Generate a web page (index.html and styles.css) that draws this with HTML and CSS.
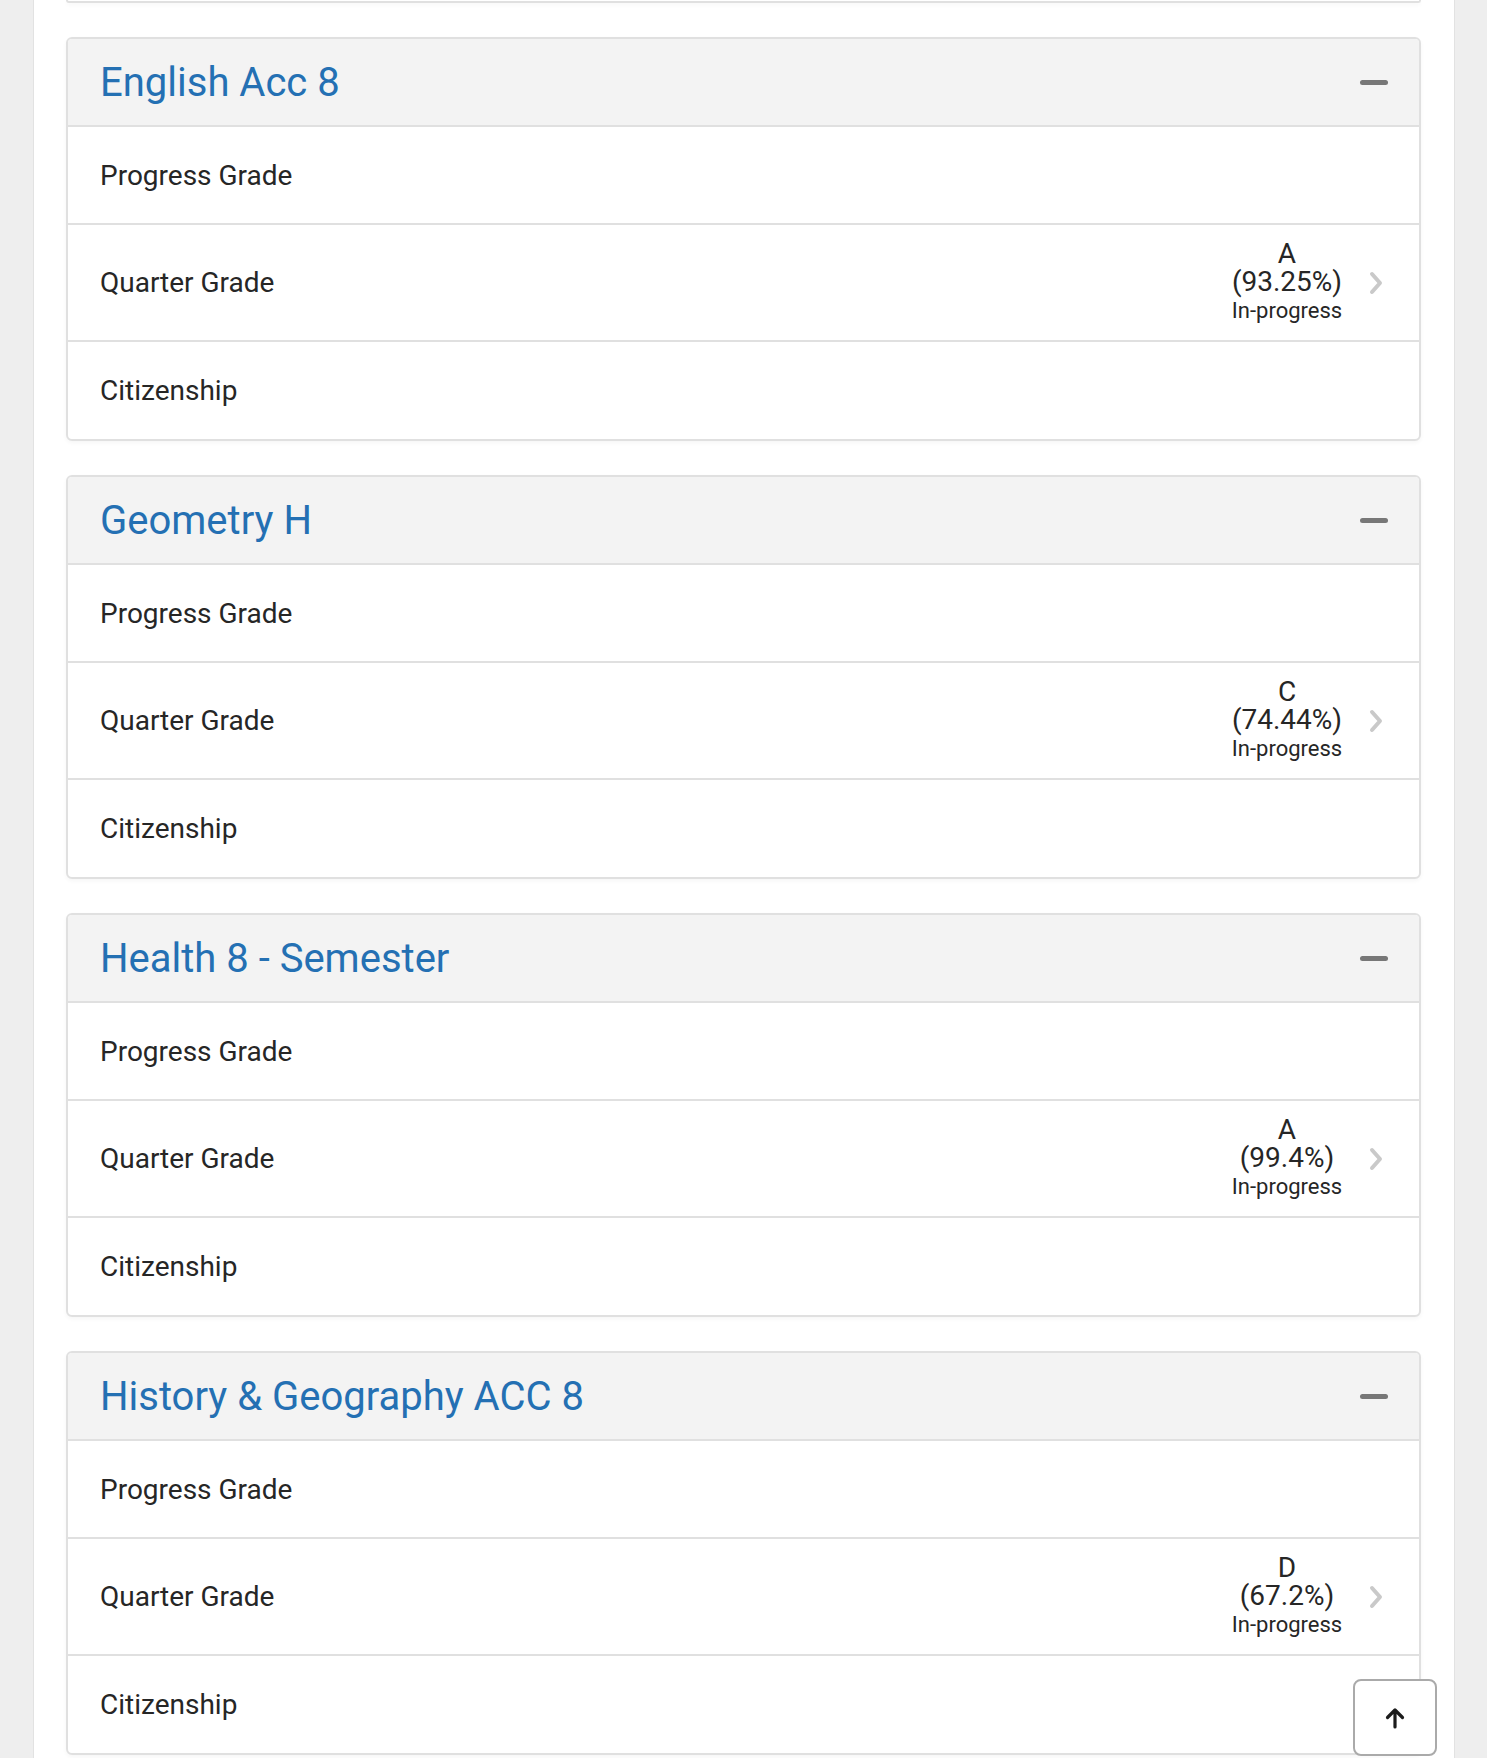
FILE: index.html
```html
<!DOCTYPE html>
<html>

	<head>
		<meta charset="UTF-8">
		<title>Grades</title>
		<link rel="stylesheet" href="styles.css">
	</head>

	<body>
		<div class="panel">
			<div class="card stub"></div>

			<div class="card">
				<div class="card-head">
					<div class="course">English Acc 8</div>
					<div class="minus"></div>
				</div>
				<div class="row">Progress Grade</div>
				<div class="row quarter">
					<span>Quarter Grade</span>
					<div class="grade">
						<div class="g-line">A</div>
						<div class="g-line">(93.25%)</div>
						<div class="g-note">In-progress</div>
					</div>
					<svg class="chev" width="14" height="24" viewBox="0 0 14 24"><polyline points="3,3 11,12 3,21" fill="none" stroke="#c9c9c9" stroke-width="4" stroke-linecap="round" stroke-linejoin="round"/></svg>
				</div>
				<div class="row last">Citizenship</div>
			</div>

			<div class="card">
				<div class="card-head">
					<div class="course">Geometry H</div>
					<div class="minus"></div>
				</div>
				<div class="row">Progress Grade</div>
				<div class="row quarter">
					<span>Quarter Grade</span>
					<div class="grade">
						<div class="g-line">C</div>
						<div class="g-line">(74.44%)</div>
						<div class="g-note">In-progress</div>
					</div>
					<svg class="chev" width="14" height="24" viewBox="0 0 14 24"><polyline points="3,3 11,12 3,21" fill="none" stroke="#c9c9c9" stroke-width="4" stroke-linecap="round" stroke-linejoin="round"/></svg>
				</div>
				<div class="row last">Citizenship</div>
			</div>

			<div class="card">
				<div class="card-head">
					<div class="course">Health 8 - Semester</div>
					<div class="minus"></div>
				</div>
				<div class="row">Progress Grade</div>
				<div class="row quarter">
					<span>Quarter Grade</span>
					<div class="grade">
						<div class="g-line">A</div>
						<div class="g-line">(99.4%)</div>
						<div class="g-note">In-progress</div>
					</div>
					<svg class="chev" width="14" height="24" viewBox="0 0 14 24"><polyline points="3,3 11,12 3,21" fill="none" stroke="#c9c9c9" stroke-width="4" stroke-linecap="round" stroke-linejoin="round"/></svg>
				</div>
				<div class="row last">Citizenship</div>
			</div>

			<div class="card">
				<div class="card-head">
					<div class="course">History &amp; Geography ACC 8</div>
					<div class="minus"></div>
				</div>
				<div class="row">Progress Grade</div>
				<div class="row quarter">
					<span>Quarter Grade</span>
					<div class="grade">
						<div class="g-line">D</div>
						<div class="g-line">(67.2%)</div>
						<div class="g-note">In-progress</div>
					</div>
					<svg class="chev" width="14" height="24" viewBox="0 0 14 24"><polyline points="3,3 11,12 3,21" fill="none" stroke="#c9c9c9" stroke-width="4" stroke-linecap="round" stroke-linejoin="round"/></svg>
				</div>
				<div class="row last">Citizenship</div>
			</div>
		</div>

		<a href="#" class="to-top">
			<svg width="26" height="26" viewBox="0 0 26 26"><path d="M13 22 V5 M5.5 12.5 L13 5 L20.5 12.5" fill="none" stroke="#1c1c1c" stroke-width="3.2" stroke-linecap="round" stroke-linejoin="round"/></svg>
		</a>
	</body>

</html>
```

FILE: styles.css
```css
* {
	margin: 0;
	padding: 0;
	box-sizing: border-box;
}

html, body {
	height: 100%;
	overflow: hidden;
}

body {
	background-color: #eeeeee;
	font-family: Roboto, "Liberation Sans", sans-serif;
	color: #262626;
}

.panel {
	width: 1422px;
	margin-left: 33px;
	min-height: 100%;
	padding: 0 33px 0 32px;
	background-color: #fff;
	border-left: 1px solid #e2e2e2;
	border-right: 1px solid #e2e2e2;
}

.card {
	border: 2px solid #e0e0e0;
	border-radius: 6px;
	margin-bottom: 34px;
	background-color: #fff;
	box-shadow: 0 2px 4px rgba(0, 0, 0, 0.04);
	overflow: hidden;
}

.stub {
	height: 3px;
	border-top: none;
	border-radius: 0 0 6px 6px;
}

.card-head {
	height: 88px;
	display: flex;
	align-items: center;
	justify-content: space-between;
	padding: 0 31px 0 32px;
	background-color: #f3f3f3;
	border-bottom: 2px solid #e0e0e0;
}

.course {
	font-size: 40px;
	color: #2470b3;
}

.minus {
	width: 28px;
	height: 5px;
	border-radius: 3px;
	background-color: #777;
}

.row {
	height: 98px;
	display: flex;
	align-items: center;
	padding: 0 36px 0 32px;
	font-size: 28px;
	border-bottom: 2px solid #e0e0e0;
}

.row.quarter {
	height: 117px;
}

.row.quarter span {
	flex: 1;
}

.row.last {
	height: 97px;
	border-bottom: none;
}

.grade {
	width: 116px;
	text-align: center;
	margin-right: 24px;
}

.g-line {
	font-size: 28px;
	line-height: 28px;
}

.g-note {
	font-size: 22px;
	line-height: 30px;
}

.chev {
	display: block;
}

.to-top {
	position: fixed;
	right: 50px;
	bottom: 2px;
	width: 84px;
	height: 77px;
	display: flex;
	align-items: center;
	justify-content: center;
	background-color: #fff;
	border: 2px solid #aaa;
	border-radius: 8px;
}
```
